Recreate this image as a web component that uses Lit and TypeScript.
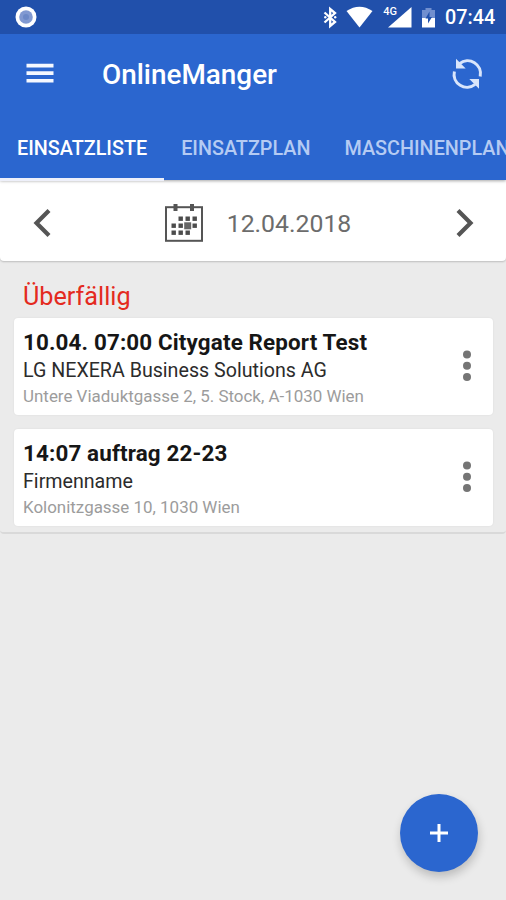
import { LitElement, html, css, svg } from "lit";
import { customElement, property } from "lit/decorators.js";

@customElement("job-card")
class JobCard extends LitElement {
  @property() heading = "";
  @property() company = "";
  @property() address = "";

  static styles = css`
    :host {
      display: flex;
      justify-content: space-between;
      box-sizing: border-box;
      height: 97px;
      background: #fff;
      border-radius: 4px;
      box-shadow: 0 0 2px rgba(0, 0, 0, 0.08);
      padding: 9px 19px 0 9px;
      white-space: nowrap;
    }
    .heading {
      font-size: 22.4px;
      line-height: 30px;
      font-weight: 700;
      color: #161616;
      letter-spacing: 0.14px;
    }
    .company {
      font-size: 19.65px;
      line-height: 28px;
      color: #2c2c2c;
    }
    .address {
      font-size: 16.95px;
      line-height: 22px;
      color: #9c9c9c;
    }
    .more {
      width: 14px;
      height: 36px;
      margin-top: 21px;
      fill: #757575;
    }
  `;

  render() {
    return html`
      <div>
        <div class="heading">${this.heading}</div>
        <div class="company">${this.company}</div>
        <div class="address">${this.address}</div>
      </div>
      <svg class="more" viewBox="0 0 14 36">
        ${[6.5, 17.8, 29.1].map((y) => svg`<circle cx="7" cy=${y} r="4"></circle>`)}
      </svg>
    `;
  }
}

const DAYS = [
  [13.5, 12.5], [20.5, 12.5], [27.5, 12.5],
  [6.5, 19.5], [13.5, 19.5], [27.5, 19.5],
  [6.5, 26.5], [13.5, 26.5], [20.5, 26.5],
];

@customElement("app-root")
class AppRoot extends LitElement {
  static styles = css`
    :host {
      display: flex;
      flex-direction: column;
      position: relative;
      width: 506px;
      height: 900px;
      overflow: hidden;
      background: #ebebeb;
      font-family: Roboto, "Liberation Sans", sans-serif;
      white-space: nowrap;
    }
    svg { display: block; flex: none; }
    .status {
      display: flex;
      align-items: center;
      justify-content: space-between;
      height: 34px;
      background: #2150ab;
      padding: 0 10px 0 15px;
    }
    .status-icons { display: flex; align-items: center; }
    .clock {
      color: #fff;
      font-size: 19.8px;
      font-weight: 500;
      line-height: 34px;
      width: 51px;
      margin-left: 9px;
      padding-top: 2px;
    }
    .header {
      position: relative;
      z-index: 1;
      background: #2b66cf;
      box-shadow: 0 1px 3px rgba(0, 0, 0, 0.35);
      clip-path: inset(0 0 -6px 0);
    }
    .toolbar {
      display: flex;
      align-items: center;
      height: 80px;
      padding: 0 23px 0 26px;
    }
    .app-title {
      flex: 1;
      margin: 0 0 0 48px;
      color: #fff;
      font-size: 27.9px;
      font-weight: 500;
      line-height: 36px;
      padding-top: 2px;
    }
    .tabs {
      display: flex;
      height: 66px;
    }
    .tab {
      flex: none;
      box-sizing: border-box;
      height: 67px;
      padding: 0 17px;
      color: #b5cbf3;
      font-size: 19.8px;
      font-weight: 500;
      line-height: 69px;
    }
    .tab.active {
      color: #fff;
      border-bottom: 3px solid #eef0fa;
    }
    .date-row {
      display: flex;
      align-items: center;
      justify-content: space-between;
      box-sizing: border-box;
      height: 81px;
      background: #fff;
      border-radius: 0 0 4px 4px;
      box-shadow: 0 1px 2px rgba(0, 0, 0, 0.2);
      padding: 4px 31px 0 32px;
    }
    .date {
      display: flex;
      align-items: center;
      gap: 24px;
      margin-left: 9px;
    }
    .date-text {
      font-size: 24.8px;
      line-height: 34px;
      color: #6c6c6c;
      padding-top: 2px;
    }
    .group {
      box-sizing: border-box;
      height: 273px;
      border-bottom: 2px solid #d9d9d9;
      border-radius: 0 0 4px 4px;
      padding: 19px 13px 0 14px;
    }
    .group-title {
      margin: 0 0 4px;
      padding-left: 9px;
      font-size: 25.2px;
      font-weight: 400;
      line-height: 34px;
      color: #e42a20;
    }
    .cards { display: flex; flex-direction: column; gap: 14px; }
    .fab {
      position: absolute;
      right: 28px;
      bottom: 28px;
      width: 78px;
      height: 78px;
      display: grid;
      place-items: center;
      padding: 0;
      border: 0;
      border-radius: 50%;
      background: #2b66cf;
      box-shadow: 1px 5px 10px rgba(0, 0, 0, 0.2);
    }
  `;

  render() {
    return html`
      <div class="status">
        <svg width="22" height="22" viewBox="0 0 22 22">
          <circle cx="11" cy="11" r="10.5" fill="#fff"></circle>
          <circle cx="11" cy="11" r="6.8" fill="#8199d1"></circle>
          <circle cx="11" cy="11" r="3" fill="#6c89c7"></circle>
        </svg>
        <div class="status-icons">
          <svg width="120" height="34" viewBox="316 0 120 34">
            <path d="M324.5 12.5 L335 22 L330.2 26 V9 L335 13 L324.5 22.5" fill="none" stroke="#fff" stroke-width="2.3"></path>
            <circle cx="325.3" cy="17.3" r="1.2" fill="#fff"></circle>
            <circle cx="335.2" cy="17.3" r="1.2" fill="#fff"></circle>
            <path d="M346.5 11 Q359.5 2.5 372.5 11 L359.5 27.5Z" fill="#fff"></path>
            <path d="M411.5 7 V27.5 H388Z" fill="#fff"></path>
            <text x="383.2" y="14.6" font-size="11" font-weight="500" fill="#fff">4G</text>
            <path d="M425.5 8 H431.5 V10 H435 V19 H422 V10 H425.5Z" fill="#718fcf"></path>
            <path d="M422 18 H435 V27.5 H422Z" fill="#fff"></path>
            <path d="M429.5 11.5 L425.5 18.5 H428 V23.5 L432 17 H429.5Z" fill="#2150ab"></path>
          </svg>
          <span class="clock">07:44</span>
        </div>
      </div>
      <div class="header">
        <div class="toolbar">
          <svg width="28" height="22" viewBox="0 0 28 22">
            <path d="M.5 2.6H27.5M.5 10.1H27.5M.5 17.7H27.5" stroke="#f5f8ff" stroke-width="3.6"></path>
          </svg>
          <h1 class="app-title">OnlineManger</h1>
          <svg width="32" height="32" viewBox="451 58 32 32">
            <g fill="none" stroke="#d9e5fb" stroke-width="3">
              <path d="M459.5 63.6 A12.9 12.9 0 0 1 480.2 76.5"></path>
              <path d="M454.4 71.5 A12.9 12.9 0 0 0 475.1 84.4"></path>
            </g>
            <path d="M456 58.8 V68.5 H465.7Z M479 88.7 V79 H469.3Z" fill="#d9e5fb"></path>
          </svg>
        </div>
        <div class="tabs">
          <div class="tab active">EINSATZLISTE</div>
          <div class="tab">EINSATZPLAN</div>
          <div class="tab">MASCHINENPLAN</div>
        </div>
      </div>
      <div class="date-row">
        <svg width="20" height="30" viewBox="0 0 20 30">
          <path d="M17 2.5 L4.5 15 L17 27.5" fill="none" stroke="#555" stroke-width="4.2"></path>
        </svg>
        <div class="date">
          <svg width="38" height="38" viewBox="0 0 38 38">
            <rect x="1" y="3.2" width="36" height="33.6" fill="none" stroke="#555" stroke-width="2"></rect>
            <path d="M10.5 0V7M27 0V7" stroke="#555" stroke-width="4"></path>
            ${DAYS.map(([x, y]) => svg`<rect x=${x} y=${y} width="4.4" height="4.4" fill="#4c4c4c"></rect>`)}
            <rect x="19.2" y="18.3" width="7" height="7" fill="#666"></rect>
          </svg>
          <span class="date-text">12.04.2018</span>
        </div>
        <svg width="20" height="30" viewBox="0 0 20 30">
          <path d="M3 2.5 L15.5 15 L3 27.5" fill="none" stroke="#555" stroke-width="4.2"></path>
        </svg>
      </div>
      <div class="group">
        <h2 class="group-title">Überfällig</h2>
        <div class="cards">
          <job-card heading="10.04. 07:00 Citygate Report Test" company="LG NEXERA Business Solutions AG" address="Untere Viaduktgasse 2, 5. Stock, A-1030 Wien"></job-card>
          <job-card heading="14:07 auftrag 22-23" company="Firmenname" address="Kolonitzgasse 10, 1030 Wien"></job-card>
        </div>
      </div>
      <button class="fab" aria-label="+">
        <svg width="18" height="18" viewBox="0 0 18 18">
          <path d="M9 0V18M0 9H18" stroke="#fff" stroke-width="3"></path>
        </svg>
      </button>
    `;
  }
}
